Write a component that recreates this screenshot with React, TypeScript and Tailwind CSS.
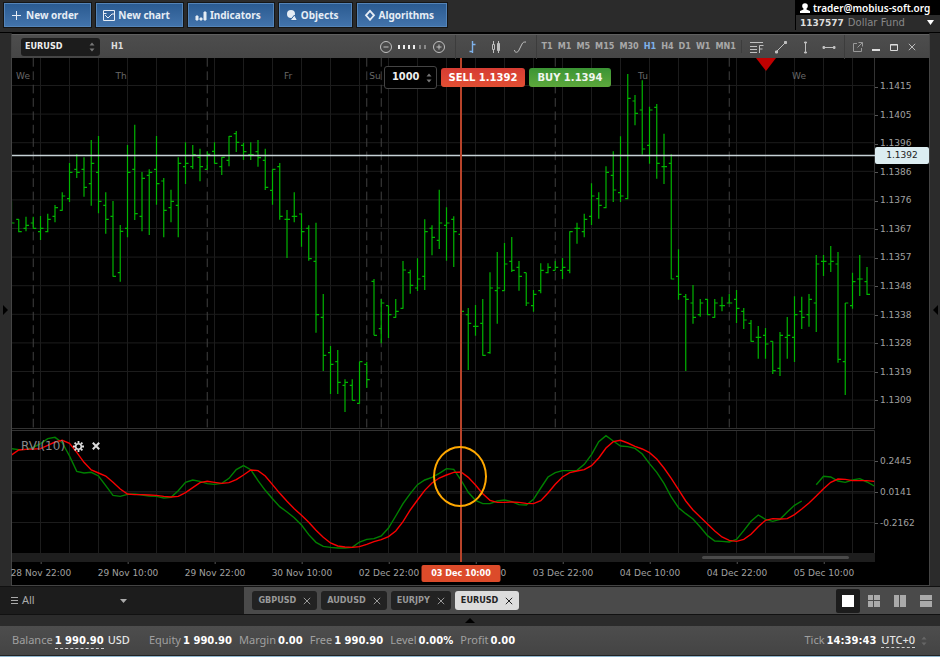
import type { ReactNode } from "react";

// One row per hour: high, low, open, close in thirds of a pixel
const bars = [
  [424, 489, 424, 489], [478, 517, 478, 515], [470, 514, 505, 496], [470, 506, 489, 505],
  [468, 540, 515, 505], [461, 517, 515, 478], [435, 487, 469, 443], [397, 452, 451, 408],
  [309, 426, 416, 337], [283, 354, 328, 337], [292, 410, 328, 382], [240, 437, 371, 310],
  [228, 460, 337, 424], [397, 521, 436, 478], [423, 650, 469, 649], [495, 665, 638, 514],
  [255, 532, 505, 337], [194, 480, 328, 461], [336, 514, 469, 355], [328, 525, 346, 337],
  [228, 434, 328, 371], [354, 532, 363, 451], [389, 487, 443, 424], [292, 532, 436, 310],
  [247, 372, 320, 310], [255, 327, 320, 284], [266, 364, 292, 320], [274, 328, 328, 283],
  [247, 311, 274, 310], [291, 345, 320, 292], [228, 319, 301, 229], [213, 276, 221, 247],
  [248, 300, 256, 275], [247, 300, 284, 284], [240, 320, 275, 293], [266, 390, 301, 382],
  [328, 434, 391, 328], [309, 479, 320, 469], [450, 594, 478, 478], [397, 487, 469, 469],
  [460, 560, 462, 515], [496, 602, 505, 596], [488, 818, 604, 764], [702, 933, 772, 886],
  [858, 1002, 878, 913], [870, 1002, 905, 967], [958, 1056, 976, 967], [958, 1021, 976, 1021],
  [905, 1031, 1030, 905], [905, 984, 913, 959], [657, 826, 664, 826], [717, 850, 806, 729],
  [737, 834, 737, 764], [717, 773, 772, 754], [603, 746, 745, 630], [629, 701, 638, 676],
  [595, 693, 684, 657], [478, 690, 649, 515], [496, 586, 505, 532], [389, 567, 541, 489],
  [442, 602, 496, 489], [469, 621, 478, 515], [515, 754, 523, 754], [744, 930, 764, 790],
  [735, 827, 799, 799], [717, 887, 790, 886], [637, 881, 878, 684], [576, 791, 692, 684],
  [549, 692, 692, 612], [531, 636, 604, 631], [603, 692, 622, 649], [638, 738, 638, 729],
  [690, 755, 737, 703], [610, 700, 692, 631], [610, 640, 638, 622], [603, 631, 631, 622],
  [594, 657, 631, 622], [514, 640, 631, 515], [488, 551, 505, 505], [461, 532, 515, 478],
  [370, 495, 469, 408], [397, 476, 416, 436], [319, 445, 443, 337], [274, 426, 346, 390],
  [229, 426, 398, 408], [42, 418, 416, 115], [105, 196, 123, 160], [61, 284, 150, 267],
  [140, 311, 256, 150], [132, 356, 142, 310], [221, 372, 320, 320], [283, 658, 310, 657],
  [568, 719, 649, 703], [702, 933, 710, 718], [675, 791, 729, 772], [717, 770, 764, 729],
  [717, 765, 718, 764], [717, 773, 772, 729], [710, 754, 737, 737], [702, 730, 729, 729],
  [690, 789, 718, 745], [744, 807, 754, 780], [780, 845, 790, 844], [798, 896, 832, 832],
  [804, 896, 826, 852], [844, 942, 844, 932], [816, 948, 925, 826], [771, 896, 832, 826],
  [709, 906, 832, 764], [710, 807, 754, 772], [702, 800, 764, 718], [585, 816, 729, 612],
  [585, 648, 604, 604], [558, 636, 612, 604], [576, 908, 612, 898], [729, 1005, 905, 729],
  [638, 746, 737, 665], [585, 708, 657, 657], [621, 705, 665, 703],
];

const rviMain = [
  86, 89, 88, 82, 71, 56, 52, 68, 108, 154, 159, 157, 168, 197, 226, 229, 223, 222, 225, 228,
  229, 234, 232, 212, 187, 180, 184, 191, 193, 190, 175, 149, 137, 149, 182, 211, 236, 260, 276, 293,
  315, 344, 367, 379, 382, 384, 384, 382, 366, 358, 356, 348, 324, 288, 251, 221, 194, 180, 172, 160,
  146, 148, 180, 217, 241, 251, 251, 243, 240, 245, 254, 255, 238, 204, 171, 158, 152, 152, 151, 133,
  104, 65, 47, 63, 78, 80, 85, 102, 131, 157, 190, 231, 263, 281, 297, 321, 347, 363, 364, 366,
  358, 332, 304, 285, 298, 304, 298, 276, 256, 243,
];

const rviTail = [194, 169, 171, 183, 187, 180, 176, 186, 198];

const rviSignal = [
  105, 90, 88, 87, 86, 76, 66, 61, 70, 97, 127, 150, 159, 168, 187, 207, 222, 224, 224, 225,
  226, 229, 231, 229, 218, 203, 188, 184, 187, 190, 188, 179, 165, 150, 152, 168, 194, 220, 244, 266,
  286, 307, 331, 352, 369, 378, 381, 382, 380, 373, 365, 359, 350, 333, 305, 270, 240, 211, 189, 174,
  165, 157, 156, 172, 195, 221, 241, 247, 247, 246, 247, 250, 251, 242, 219, 193, 171, 158, 153, 149,
  137, 114, 84, 65, 61, 69, 79, 87, 98, 117, 144, 175, 209, 243, 270, 291, 312, 333, 351, 361,
  364, 358, 343, 320, 301, 296, 297, 296, 284, 267, 249, 228, 206, 187, 177, 178, 182, 182, 182, 184,
];

const WIDTH = 863;
const STEP = 7.25;

const barX = (i: number) => i * STEP - 0.5;
const priceY = (v: number) => v / 3 + 2;
const rviY = (v: number) => v / 3 - 10;

const gridX = Array.from({ length: 29 }, (_, i) => 28.5 + i * 29);
const gridY = Array.from({ length: 12 }, (_, i) => 27.5 + i * 28.6);
const sessions = [3, 27, 49, 51, 75, 99];

const toPoints = (values: number[], start = 0) =>
  values.map((v, i) => `${barX(start + i)},${rviY(v)}`).join(" ");

const prices = [
  "1.1415", "1.1405", "1.1396", "1.1386", "1.1376", "1.1367",
  "1.1357", "1.1348", "1.1338", "1.1328", "1.1319", "1.1309",
];

const times = [
  "28 Nov 22:00", "29 Nov 10:00", "29 Nov 22:00", "30 Nov 10:00", "02 Dec 22:00",
  "03 Dec 10:00", "03 Dec 22:00", "04 Dec 10:00", "04 Dec 22:00", "05 Dec 10:00",
];

const days = [
  { name: "We", x: 11 },
  { name: "Th", x: 109 },
  { name: "Fr", x: 276 },
  { name: "Su", x: 363 },
  { name: "Tu", x: 631 },
  { name: "We", x: 787 },
];

const periods = ["T1", "M1", "M5", "M15", "M30", "H1", "H4", "D1", "W1", "MN1"];

const percent = (x: number) => `${(x / WIDTH) * 100}%`;

const Spinner = ({ className = "" }: { className?: string }) => (
  <svg className={`h-3 w-2 shrink-0 ${className}`} viewBox="0 0 8 12" fill="currentColor" aria-hidden="true">
    <path d="M1.5 4.5 4 1.5l2.5 3zM1.5 7.5 4 10.5l2.5-3z" />
  </svg>
);

const Cross = ({ className = "" }: { className?: string }) => (
  <svg className={className} viewBox="0 0 8 8" stroke="currentColor" fill="none" aria-hidden="true">
    <path d="M.8.8 7.2 7.2M7.2.8.8 7.2" />
  </svg>
);

const MenuButton = ({ label, icon }: { label: string; icon: ReactNode }) => (
  <button className="flex h-6 items-center gap-[3px] border border-[#5484b8] bg-linear-to-b from-[#2b5b91] to-[#4273ab] pr-3 pl-[6px] font-[Noto_Sans,sans-serif] text-[10px] font-bold text-[#e6edf5] outline outline-[#151515]">
    <svg className="h-3 w-3 shrink-0" viewBox="0 0 12 12" fill="none" stroke="currentColor" aria-hidden="true">
      {icon}
    </svg>
    {label}
  </button>
);

const ToolButton = ({ label, children, className = "text-[#c0c0c0]" }: { label: string; children: ReactNode; className?: string }) => (
  <button aria-label={label} className={`flex h-6 w-6 items-center justify-center ${className}`}>
    <svg className="h-[14px] w-[14px]" viewBox="0 0 14 14" fill="none" stroke="currentColor" aria-hidden="true">
      {children}
    </svg>
  </button>
);

const Header = () => (
  <header className="flex h-8 items-start justify-between bg-[#2b2b2b]">
    <nav className="flex gap-[5px] pt-[3px] pl-1">
      <MenuButton label="New order" icon={<path d="M1 6.5h9M5.5 2v9" />} />
      <MenuButton label="New chart" icon={<path d="M.5 1.5h11v10H.5zM.5 4.5h3M2 6l3 3 4-4h2" />} />
      <MenuButton
        label="Indicators"
        icon={<path d="M1 7h2v4H1zM5 9h2v2H5zM9 3h2v8H9z" fill="currentColor" />}
      />
      <MenuButton
        label="Objects"
        icon={
          <g fill="currentColor" stroke="none">
            <circle cx="5" cy="5" r="4" />
            <path d="M4 11.5 8.5 6l3 5.5z" stroke="#35669e" />
          </g>
        }
      />
      <MenuButton label="Algorithms" icon={<path d="m6 1.8 4 4.5-4 4.5-4-4.5z" strokeWidth="1.8" />} />
    </nav>
    <div className="w-[145px] leading-[14px]">
      <div className="flex h-[15px] items-center gap-[3px] bg-black pl-[5px] font-[Noto_Sans,sans-serif] text-[10px] font-semibold text-white">
        <svg className="h-[10px] w-[10px]" viewBox="0 0 10 10" fill="currentColor" aria-hidden="true">
          <circle cx="5" cy="3" r="2.8" />
          <path d="M0 10V8l3.5-1.5V5h3v1.5L10 8v2z" />
        </svg>
        trader@mobius-soft.org
      </div>
      <button className="flex h-[15px] w-full items-center border-l border-black pl-1 text-[10px]">
        <b className="text-[9px] text-[#ddd]">1137577</b>
        <span className="ml-1 text-[#888]">Dollar Fund</span>
        <svg className="mr-[6px] ml-auto h-[5px] w-[7px]" viewBox="0 0 7 5" fill="#fff" aria-hidden="true">
          <path d="M0 0h7L3.5 5z" />
        </svg>
      </button>
    </div>
  </header>
);

const ChartToolbar = () => (
  <div className="flex h-6 shrink-0 items-center border-t border-[#606060] bg-linear-to-b from-[#4d4d4d] to-[#464646] font-[DejaVu_Sans_Condensed,DejaVu_Sans,sans-serif] text-[9px] font-bold">
    <button className="ml-[9px] flex h-[18px] w-[79px] items-center justify-between rounded-[3px] bg-[#1c1c1c] px-1 text-[#eee]">
      EURUSD
      <Spinner className="text-[#777]" />
    </button>
    <span className="ml-[11px] text-[#ddd]">H1</span>

    <div className="ml-auto flex items-center border-r border-[#3c3c3c] pr-1">
      <ToolButton label="Zoom out">
        <circle cx="7" cy="7" r="5.5" />
        <path d="M4.5 7h5" />
      </ToolButton>
      <svg className="h-[4px] w-[29px]" viewBox="0 0 29 4" aria-hidden="true">
        {[0, 5, 10, 15, 21, 26].map((x, i) => (
          <rect key={x} x={x} width="2" height="4" fill={i < 4 ? "#eee" : "#888"} />
        ))}
      </svg>
      <ToolButton label="Zoom in">
        <circle cx="7" cy="7" r="5.5" />
        <path d="M4.5 7h5M7 4.5v5" />
      </ToolButton>
    </div>
    <div className="flex items-center border-r border-[#3c3c3c] px-1">
      <ToolButton label="Bars" className="text-[#7fb2ea]">
        <path d="M7.500 1v12M4.500 11.500h3M7.500 4.500h3" strokeWidth="1.400" />
      </ToolButton>
      <ToolButton label="Candles">
        <path d="M4.500 1v12M9.500 1v12" />
        <path d="M3.500 4.500h2v5h-2z" fill="#4a4a4a" />
        <path d="M8.500 3.500h2v7h-2z" fill="currentColor" />
      </ToolButton>
      <ToolButton label="Line">
        <path d="M1.500 10c0 3 3.500 3 4.500 0L9 4c1-2 2-2 4-2" />
      </ToolButton>
    </div>
    <div className="flex items-center gap-[5px] border-r border-[#3c3c3c] px-[5px] text-[#a8a8a8]">
      {periods.map((p) => (
        <button key={p} className={p === "H1" ? "text-[#7fb2ea]" : ""}>
          {p}
        </button>
      ))}
    </div>
    <div className="flex items-center border-r border-[#3c3c3c] px-[3px]">
      <ToolButton label="Fibonacci">
        <path d="M0 2.500h13M0 6.500h7M0 9.500h7M0 12.500h7M9.500 13V5.500h4M9.500 9h3" />
      </ToolButton>
      <ToolButton label="Trend line">
        <path d="M2.500 11.500l9-9" />
        <path d="M1.500 11h2v2h-2zM10.500 1.500h2v2h-2z" fill="currentColor" />
      </ToolButton>
      <ToolButton label="Vertical line">
        <path d="M7.500 2v10" />
        <path d="M6.500 2h2v1h-2zM6.500 12h2v1h-2z" fill="currentColor" />
      </ToolButton>
      <ToolButton label="Horizontal line">
        <path d="M1 7.500h12" />
        <path d="M1 6.500h1.500v2H1zM11.500 6.500H13v2h-1.500z" fill="currentColor" />
      </ToolButton>
    </div>
    <div className="flex items-center pr-2 pl-1 text-[#bbb]">
      <button aria-label="Detach" className="flex h-6 w-[18px] items-center justify-center">
        <svg className="h-[10px] w-[10px]" viewBox="0 0 10 10" fill="none" stroke="#999" aria-hidden="true">
          <path d="M4 1.500H.5v8h8V6M5.500.5h4v4M9.500.5l-5 5" />
        </svg>
      </button>
      <button aria-label="Minimize" className="flex h-6 w-[18px] items-center justify-center">
        <svg className="h-2 w-2" viewBox="0 0 8 8" fill="#ddd" aria-hidden="true">
          <path d="M0 6h8v2H0z" />
        </svg>
      </button>
      <button aria-label="Maximize" className="flex h-6 w-[18px] items-center justify-center">
        <svg className="h-2 w-2" viewBox="0 0 8 8" fill="none" stroke="#ddd" aria-hidden="true">
          <path d="M.5 1.500h7v6h-7zM.5 2h7" />
        </svg>
      </button>
      <button aria-label="Close" className="flex h-6 w-[18px] items-center justify-center">
        <Cross className="h-2 w-2" />
      </button>
    </div>
  </div>
);

const PricePlot = () => (
  <svg className="block h-[371px] w-full" viewBox="0 0 863 371" preserveAspectRatio="none" aria-label="EURUSD H1">
    <g stroke="#1c1c1c">
      {gridX.map((x) => <path key={x} d={`M${x} 0v370`} />)}
      {gridY.map((y) => <path key={y} d={`M0 ${y}h863`} />)}
    </g>
    <g stroke="#404040" strokeDasharray="8.7 4.66">
      {sessions.map((i) => <path key={i} d={`M${barX(i)} 0v370`} />)}
    </g>
    <path d="M0 370.500h863" stroke="#333" />
    <path d="M862.500 0v371" stroke="#333" />
    <g stroke="#00b400" strokeWidth="1.200" fill="none">
      {bars.map(([high, low, open, close], i) => (
        <path
          key={i}
          d={`M${barX(i)} ${priceY(high)}V${priceY(low)}M${barX(i) - 2.5} ${priceY(open)}h2.500M${barX(i)} ${priceY(close)}h3`}
        />
      ))}
    </g>
    <path d="M0 97.500h863" stroke="#c6d2d6" strokeWidth="1.500" />
    <path d="M744 0h20l-10 13z" fill="#c00000" />
  </svg>
);

const RviPlot = () => (
  <svg className="block h-[123px] w-full" viewBox="0 0 863 123" preserveAspectRatio="none" aria-label="RVI">
    <g stroke="#1c1c1c">
      {gridX.map((x) => <path key={x} d={`M${x} 0v123`} />)}
      {[30.5, 61.5, 63, 92.5].map((y) => <path key={y} d={`M0 ${y}h863`} />)}
    </g>
    <path d="M0 .5h862.500V123" stroke="#333" fill="none" />
    <g fill="none" strokeWidth="1.400">
      <polyline points={toPoints(rviMain)} stroke="#008000" />
      <polyline points={toPoints(rviTail, 111)} stroke="#008000" />
      <polyline points={toPoints(rviSignal)} stroke="#f80000" />
    </g>
  </svg>
);

const OrderPanel = () => (
  <form className="absolute top-2 left-[43.1%] flex items-center gap-1 text-[10px] font-bold">
    <label className="flex h-[23px] w-[53px] items-center rounded-[3px] border border-[#444] bg-black pr-[3px] text-[#eee]">
      <input aria-label="Amount" defaultValue="1000" className="w-full min-w-0 bg-transparent pl-[7px] font-[DejaVu_Sans_Condensed,DejaVu_Sans,sans-serif] text-[11px] font-semibold outline-none" />
      <Spinner className="text-[#777]" />
    </label>
    <button type="button" className="h-[19px] w-[84px] rounded-[3px] bg-linear-to-b from-[#d63c33] to-[#e24f33] text-white">
      SELL 1.1392
    </button>
    <button type="button" className="h-[19px] w-[82px] rounded-[3px] bg-linear-to-b from-[#3a9434] to-[#5da83c] text-[#f0f5ee]">
      BUY 1.1394
    </button>
  </form>
);

const ChartWindow = () => (
  <section className="flex min-w-0 flex-1 flex-col border border-[#444] border-t-black bg-black">
    <ChartToolbar />
    <div className="flex">
      <div className="relative min-w-0 flex-1">
        <PricePlot />
        <div className="h-px" />
        <RviPlot />
        <div className="h-[9px] bg-[#1e1e1e] pt-[3px]">
          <div className="ml-[80%] h-[3px] w-[17%] rounded-full bg-[#4a4a4a]" />
        </div>
        {days.map((d, i) => (
          <span
            key={i}
            className="absolute top-3 -translate-x-1/2 text-[9px] text-[#686868]"
            style={{ left: percent(d.x) }}
          >
            {d.name}
          </span>
        ))}
        {/* crosshair and the marked crossing */}
        <div className="absolute top-0 bottom-0 w-[2px] -translate-x-1/2 bg-[#b8432a]" style={{ left: percent(449) }} />
        <div
          className="absolute top-[388px] h-[61px] w-[54px] -translate-x-1/2 rounded-[50%] border-2 border-[#ffa800]"
          style={{ left: percent(448) }}
        />
        <OrderPanel />
        <div className="absolute top-[379px] left-[9px] flex items-center gap-2 text-[#ddd]">
          <span className="text-[12px] text-[#888]">RVI(10)</span>
          <button aria-label="Settings">
            <svg className="block h-[11px] w-[11px]" viewBox="0 0 11 11" fill="none" stroke="currentColor" aria-hidden="true">
              <circle cx="5.5" cy="5.5" r="2.8" strokeWidth="1.600" />
              <path d="M5.500 0v2M5.500 9v2M0 5.500h2M9 5.500h2M1.600 1.600 3 3M8 8l1.400 1.400M1.600 9.400 3 8M8 3l1.400-1.400" strokeWidth="1.800" />
            </svg>
          </button>
          <button aria-label="Remove">
            <Cross className="block h-2 w-2 stroke-2" />
          </button>
        </div>
      </div>
      <div className="relative w-[54px] text-[9px] text-[#a0a0a0]">
        <div className="flex h-[353px] flex-col justify-between pt-[19px]">
          {prices.map((p) => (
            <span key={p} className="flex h-5 items-center gap-[2px]">
              <i className="h-px w-[3px] bg-[#555]" />
              {p}
            </span>
          ))}
        </div>
        <span className="absolute top-[89px] left-0 flex h-[17px] w-full items-center justify-center rounded-[2px] bg-[#dcedf1] text-[#222]">
          1.1392
        </span>
        <div className="absolute top-[388px] flex flex-col">
          {["0.2445", "0.0141", "-0.2162"].map((v) => (
            <span key={v} className="flex h-[31px] items-center gap-[2px]">
              <i className="h-px w-[3px] bg-[#555]" />
              {v}
            </span>
          ))}
        </div>
      </div>
    </div>
    <div className="relative mr-[54px] h-[23px] text-[9px] text-[#a0a0a0]">
      {times.map((t, i) => (
        <span
          key={t}
          className="absolute top-0 -translate-x-1/2 pt-[5px] whitespace-nowrap before:absolute before:top-0 before:left-1/2 before:h-[2px] before:w-px before:bg-[#555]"
          style={{ left: percent(29 + i * 87) }}
        >
          {t}
        </span>
      ))}
      <span
        className="absolute top-[3px] flex h-[17px] w-[79px] -translate-x-1/2 items-center justify-center rounded-[2px] bg-[#dc4b2a] font-[DejaVu_Sans_Condensed,DejaVu_Sans,sans-serif] font-bold text-white"
        style={{ left: percent(449) }}
      >
        03 Dec 10:00
      </span>
    </div>
  </section>
);

const TabBar = () => (
  <div className="flex h-[29px] border-y border-[#111] bg-[#4a4a4a] text-[9px]">
    <button className="flex w-[26%] items-center gap-1 bg-[#1c1c1c] pl-[11px] font-[Noto_Sans,sans-serif] text-[11px] text-[#aaa]">
      <svg className="h-[7px] w-[7px]" viewBox="0 0 7 7" stroke="currentColor" aria-hidden="true">
        <path d="M0 .5h7M0 3.500h7M0 6.500h7" />
      </svg>
      All
      <svg className="ml-[81px] h-[4px] w-[7px]" viewBox="0 0 7 4" fill="currentColor" aria-hidden="true">
        <path d="M0 0h7L3.500 4z" />
      </svg>
    </button>
    <div className="flex items-center gap-1 pl-2 font-[DejaVu_Sans_Condensed,DejaVu_Sans,sans-serif] font-bold">
      {["GBPUSD", "AUDUSD", "EURJPY", "EURUSD"].map((s) => (
        <button
          key={s}
          className={
            s === "EURUSD"
              ? "flex h-[19px] items-center gap-[7px] rounded-[3px] bg-[#dcdcdc] px-[6px] text-[#222]"
              : "flex h-[19px] items-center gap-[7px] rounded-[3px] bg-[#222] px-[6px] text-[#999]"
          }
        >
          {s}
          <Cross className="h-2 w-2" />
        </button>
      ))}
    </div>
    <div className="ml-auto flex items-center gap-[2px] pr-[2px]">
      <button aria-label="One chart" className="flex h-6 w-6 items-center justify-center rounded-[2px] bg-[#1c1c1c]">
        <span className="h-3 w-3 bg-white" />
      </button>
      <ToolButton label="Four charts" className="text-[#aaa]">
        <path d="M1 1h5v5H1zM7 1h6v5H7zM1 7h5v6H1zM7 7h6v6H7z" fill="currentColor" stroke="none" />
      </ToolButton>
      <ToolButton label="Two columns" className="text-[#aaa]">
        <path d="M1 1h5v12H1zM7 1h6v12H7z" fill="currentColor" stroke="none" />
      </ToolButton>
      <ToolButton label="Two rows" className="text-[#aaa]">
        <path d="M1 1h12v5H1zM1 7h12v6H1z" fill="currentColor" stroke="none" />
      </ToolButton>
    </div>
  </div>
);

const Stat = ({ label, children }: { label: string; children: ReactNode }) => (
  <span className="flex items-center gap-[2px] whitespace-nowrap">
    <span className="text-[#a0a0a0]">{label}</span>
    {children}
  </span>
);

const valueClass = "font-[DejaVu_Sans,sans-serif] text-[10px] font-bold text-white";

const StatusBar = () => (
  <footer className="flex h-[30px] items-center border-b border-[#222] bg-linear-to-b from-[#4d4d4d] to-[#444] px-3 font-[Noto_Sans,sans-serif] text-[11px]">
    <Stat label="Balance">
      <b className={`${valueClass} border-b border-dashed border-[#ccc]`}>1 990.90</b>
      <span className="ml-[2px] font-medium text-[#e4e4e4]">USD</span>
    </Stat>
    <div className="ml-[19px] flex gap-[7px]">
      <Stat label="Equity"><b className={valueClass}>1 990.90</b></Stat>
      <Stat label="Margin"><b className={valueClass}>0.00</b></Stat>
      <Stat label="Free"><b className={valueClass}>1 990.90</b></Stat>
      <Stat label="Level"><b className={valueClass}>0.00%</b></Stat>
      <Stat label="Profit"><b className={valueClass}>0.00</b></Stat>
    </div>
    <div className="ml-auto flex items-center gap-[5px]">
      <Stat label="Tick"><b className={valueClass}>14:39:43</b></Stat>
      <button className="border-b border-dashed border-[#ccc] leading-[14px] font-medium text-[#e4e4e4]">UTC+0</button>
      <Spinner className="text-[#666]" />
    </div>
  </footer>
);

export default function App() {
  return (
    <div className="bg-[#2b2b2b] font-[DejaVu_Sans,Verdana,sans-serif]">
      <Header />
      <main className="flex border-t border-black">
        <button aria-label="Show left panel" className="flex w-[11px] items-center">
          <svg className="ml-[3px] h-[10px] w-[5px]" viewBox="0 0 5 10" fill="#000" aria-hidden="true">
            <path d="M0 0v10l5-5z" />
          </svg>
        </button>
        <ChartWindow />
        <button aria-label="Show right panel" className="flex w-[10px] items-center">
          <svg className="ml-[3px] h-[10px] w-[5px]" viewBox="0 0 5 10" fill="#000" aria-hidden="true">
            <path d="M5 0v10L0 5z" />
          </svg>
        </button>
      </main>
      <TabBar />
      <button aria-label="Show bottom panel" className="flex h-[11px] w-full items-center justify-center">
        <svg className="h-[5px] w-[10px]" viewBox="0 0 10 5" fill="#000" aria-hidden="true">
          <path d="M0 5h10L5 0z" />
        </svg>
      </button>
      <StatusBar />
      <div className="h-px bg-[#8fb4cc]" />
    </div>
  );
}
